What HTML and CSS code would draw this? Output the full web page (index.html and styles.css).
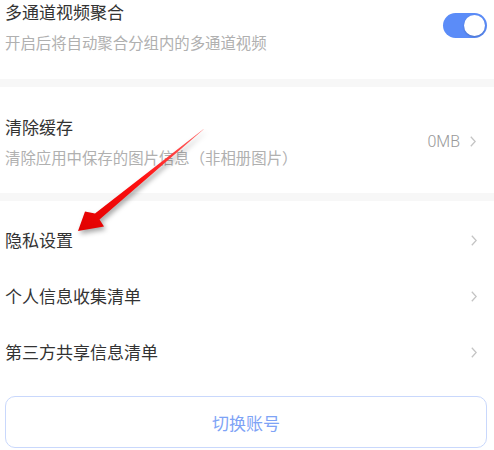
FILE: index.html
```html
<!DOCTYPE html>
<html lang="zh-CN">
<head>
<meta charset="utf-8"/>
<meta content="width=device-width, initial-scale=1.0" name="viewport"/>
<title>设置</title>
<link rel="stylesheet" href="styles.css">
</head>
<body>
<div class="page">
  <div class="section first">
    <div class="info">
      <div class="title">多通道视频聚合</div>
      <div class="desc">开启后将自动聚合分组内的多通道视频</div>
    </div>
    <div class="switch on"><span class="knob"></span></div>
  </div>
  <div class="gap"></div>
  <div class="section cache">
    <div class="info">
      <div class="title">清除缓存</div>
      <div class="desc">清除应用中保存的图片信息（非相册图片）</div>
    </div>
    <div class="extra">
      <span class="value">0MB</span>
      <svg class="chev" viewBox="0 0 6 11" width="6" height="11"><polyline points="0.8,0.8 5.2,5.5 0.8,10.2"/></svg>
    </div>
  </div>
  <div class="gap"></div>
  <div class="list">
    <div class="row">
      <span class="title">隐私设置</span>
      <svg class="chev" viewBox="0 0 6 11" width="6" height="11"><polyline points="0.8,0.8 5.2,5.5 0.8,10.2"/></svg>
    </div>
    <div class="row">
      <span class="title">个人信息收集清单</span>
      <svg class="chev" viewBox="0 0 6 11" width="6" height="11"><polyline points="0.8,0.8 5.2,5.5 0.8,10.2"/></svg>
    </div>
    <div class="row">
      <span class="title">第三方共享信息清单</span>
      <svg class="chev" viewBox="0 0 6 11" width="6" height="11"><polyline points="0.8,0.8 5.2,5.5 0.8,10.2"/></svg>
    </div>
  </div>
  <button class="switch-account" type="button">切换账号</button>

  <!-- annotation arrow drawn over the screenshot -->
  <svg class="arrow" viewBox="0 0 494 450" width="494" height="450">
    <defs>
      <linearGradient id="red" x1="1" y1="0" x2="0" y2="1">
        <stop offset="0" stop-color="#ff6a6a"/>
        <stop offset="0.5" stop-color="#ff1010"/>
        <stop offset="1" stop-color="#e00000"/>
      </linearGradient>
    </defs>
    <polygon fill="url(#red)" points="204,129 99.5,219.5 104,226.5 78,231 85,211.5 95,213.5 203,129.5"/>
  </svg>
</div>
</body>
</html>
```

FILE: styles.css
```css
body {
  margin: 0;
  background: #fff;
  font-family: "Noto Sans CJK SC", "Noto Sans", sans-serif;
  color: #333;
}
.page {
  position: relative;
  width: 494px;
  height: 450px;
  overflow: hidden;
}
.section {
  display: flex;
  align-items: center;
  justify-content: space-between;
  padding: 0 7px 0 5px;
}
.section.first {
  padding-top: 0;
  padding-bottom: 26px;
  align-items: flex-start;
}
.section.cache {
  padding-top: 28px;
  padding-bottom: 25px;
}
.title {
  font-size: 17px;
  line-height: 24px;
  color: #333;
}
.desc {
  margin-top: 7px;
  font-size: 15.4px;
  line-height: 22px;
  color: #b0b0b0;
}
.gap {
  height: 8px;
  background: #f7f7f7;
}
.switch {
  width: 44px;
  height: 25px;
  margin-top: 13px;
  border-radius: 13px;
  background: #5b8cf8;
  position: relative;
}
.switch .knob {
  position: absolute;
  right: 2px;
  top: 2px;
  width: 21px;
  height: 21px;
  border-radius: 50%;
  background: #fff;
  box-shadow: 0 1px 2px rgba(0,0,0,0.2);
}
.extra {
  display: flex;
  align-items: center;
  gap: 10px;
  margin-right: 11px;
}
.value {
  font-family: Roboto, "Noto Sans", sans-serif;
  font-weight: 300;
  font-size: 16px;
  color: #999;
}
.chev polyline {
  fill: none;
  stroke: #c4c4c4;
  stroke-width: 1.3;
}
.list {
  padding-top: 11px;
}
.row {
  height: 56px;
  display: flex;
  align-items: center;
  justify-content: space-between;
  padding: 0 17px 0 5px;
}
.switch-account {
  display: block;
  box-sizing: border-box;
  width: 482px;
  height: 52px;
  margin: 16px 0 0 5px;
  background: #fff;
  border: 1.5px solid #c9d8fc;
  border-radius: 10px;
  font-family: inherit;
  font-size: 17px;
  color: #7ea3f6;
}
.arrow {
  position: absolute;
  left: 0;
  top: 0;
  pointer-events: none;
  filter: drop-shadow(2px 3px 2.5px rgba(0,0,0,0.35));
}
```
